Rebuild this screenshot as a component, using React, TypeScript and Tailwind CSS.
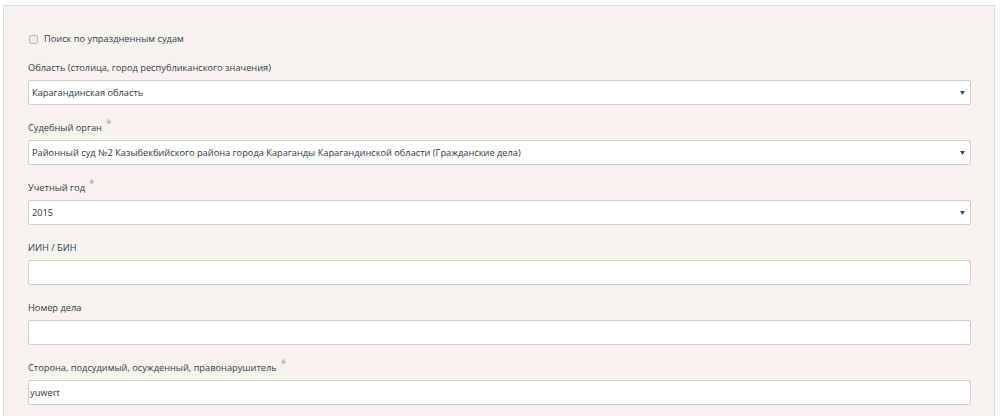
import { useState } from "react";

const font = { fontFamily: "'Open Sans', 'Noto Sans', sans-serif" };

function Req() {
  return <span className="ml-[4px] text-[10px] leading-none text-[#c79b7a] relative -top-[4px]">*</span>;
}

function Label({ text, required }: { text: string; required?: boolean }) {
  return (
    <div className="h-3 leading-3 text-[9.25px] text-[#34404d] mb-1.5 whitespace-nowrap">
      {text}
      {required && <Req />}
    </div>
  );
}

function SelectBox({ value }: { value: string }) {
  return (
    <div className="h-[25px] bg-white border border-[#cfcfcf] rounded-[2px] flex items-center justify-between pl-[3px] pr-[5px] text-[9.25px] text-[#2c3845]">
      <span className="whitespace-nowrap">{value}</span>
      <svg width="5" height="4" viewBox="0 0 5 4">
        <path d="M0 0 L5 0 L2.5 4 Z" fill="#3d4a5e" />
      </svg>
    </div>
  );
}

function TextBox({ value = "" }: { value?: string }) {
  const [v, setV] = useState(value);
  return (
    <input
      value={v}
      onChange={(e) => setV(e.target.value)}
      className="block w-full h-[25px] bg-white border border-[#cfcfcf] rounded-[2px] px-px text-[9.25px] text-[#2c3845] outline-none"
      style={font}
    />
  );
}

function Field({ label, required, children }: { label: string; required?: boolean; children: React.ReactNode }) {
  return (
    <div className="mb-[17px]">
      <Label text={label} required={required} />
      {children}
    </div>
  );
}

export default function App() {
  return (
    <div className="w-[1000px] h-[416px] bg-white overflow-hidden pt-[5px] pl-[3px] pr-[5px]" style={font}>
      <div className="h-full bg-[#f6f3ee] border-t border-x border-[#dcdcdc] pt-[27px] pl-[24px] pr-[23px]">
        <label className="flex items-center h-3 mb-[17px] text-[9.25px] text-[#34404d]">
          <span className="w-[9px] h-[9px] border border-[#b8b8b8] bg-[#ececec] rounded-[2px] ml-[1px] mr-[6px]" />
          Поиск по упраздненным судам
        </label>

        <Field label="Область (столица, город республиканского значения)">
          <SelectBox value="Карагандинская область" />
        </Field>

        <Field label="Судебный орган" required>
          <SelectBox value="Районный суд №2 Казыбекбийского района города Караганды Карагандинской области (Гражданские дела)" />
        </Field>

        <Field label="Учетный год" required>
          <SelectBox value="2015" />
        </Field>

        <Field label="ИИН / БИН">
          <TextBox />
        </Field>

        <Field label="Номер дела">
          <TextBox />
        </Field>

        <Field label="Сторона, подсудимый, осужденный, правонарушитель" required>
          <TextBox value="yuwert" />
        </Field>
      </div>
    </div>
  );
}
